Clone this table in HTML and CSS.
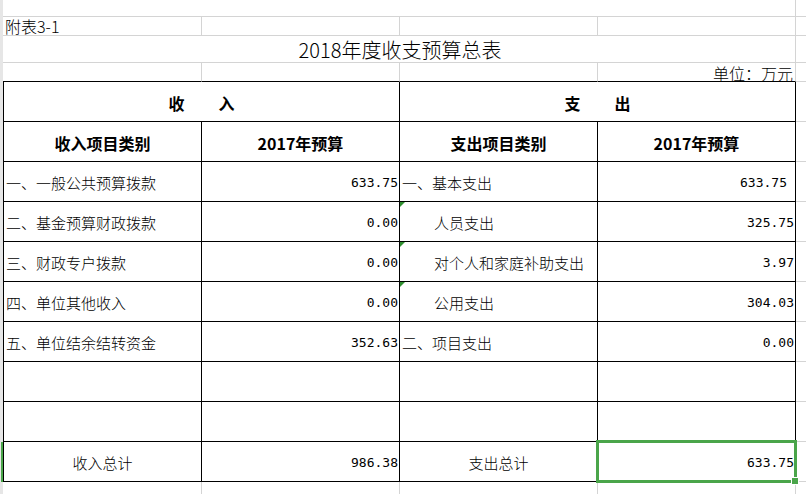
FILE: index.html
```html
<!DOCTYPE html>
<html lang="zh-CN">
<head>
<meta charset="utf-8">
<title>2018年度收支预算总表</title>
<link rel="stylesheet" href="styles.css">
</head>
<body>
<div class="sheet">
  <!-- row 0 -->
  <div class="rh"></div>
  <div class="g span4"></div>
  <div class="gx"></div>

  <!-- row 1 -->
  <div class="rh"></div>
  <div class="g note">附表3-1</div>
  <div class="g"></div>
  <div class="g"></div>
  <div class="g"></div>
  <div class="gx"></div>

  <!-- row 2 -->
  <div class="rh"></div>
  <div class="g span4 title">2018年度收支预算总表</div>
  <div class="gx"></div>

  <!-- row 3 -->
  <div class="rh"></div>
  <div class="g edge"></div>
  <div class="g edge"></div>
  <div class="g edge"></div>
  <div class="g edge unit">单位：万元</div>
  <div class="gx"></div>

  <!-- header 1 -->
  <div class="rh"></div>
  <div class="t first span2 hd spread"><span>收</span><span>入</span></div>
  <div class="t span2 hd spread"><span>支</span><span>出</span></div>
  <div class="gx"></div>

  <!-- header 2 -->
  <div class="rh"></div>
  <div class="t first hd">收入项目类别</div>
  <div class="t hd">2017年预算</div>
  <div class="t hd">支出项目类别</div>
  <div class="t hd">2017年预算</div>
  <div class="gx"></div>

  <!-- data -->
  <div class="rh"></div>
  <div class="t first lbl">一、一般公共预算拨款</div>
  <div class="t num">633.75</div>
  <div class="t lbl">一、基本支出</div>
  <div class="t num trail">633.75</div>
  <div class="gx"></div>

  <div class="rh"></div>
  <div class="t first lbl">二、基金预算财政拨款</div>
  <div class="t num">0.00</div>
  <div class="t lbl indent flag">人员支出</div>
  <div class="t num">325.75</div>
  <div class="gx"></div>

  <div class="rh"></div>
  <div class="t first lbl">三、财政专户拨款</div>
  <div class="t num">0.00</div>
  <div class="t lbl indent flag">对个人和家庭补助支出</div>
  <div class="t num">3.97</div>
  <div class="gx"></div>

  <div class="rh"></div>
  <div class="t first lbl">四、单位其他收入</div>
  <div class="t num">0.00</div>
  <div class="t lbl indent flag">公用支出</div>
  <div class="t num">304.03</div>
  <div class="gx"></div>

  <div class="rh"></div>
  <div class="t first lbl">五、单位结余结转资金</div>
  <div class="t num">352.63</div>
  <div class="t lbl">二、项目支出</div>
  <div class="t num">0.00</div>
  <div class="gx"></div>

  <div class="rh"></div>
  <div class="t first"></div>
  <div class="t"></div>
  <div class="t"></div>
  <div class="t"></div>
  <div class="gx"></div>

  <div class="rh"></div>
  <div class="t first"></div>
  <div class="t"></div>
  <div class="t"></div>
  <div class="t"></div>
  <div class="gx"></div>

  <!-- totals -->
  <div class="rh active"></div>
  <div class="t first center">收入总计</div>
  <div class="t num">986.38</div>
  <div class="t center">支出总计</div>
  <div class="t num">633.75</div>
  <div class="gx"></div>

  <!-- trailing row -->
  <div class="rh"></div>
  <div class="v"></div>
  <div class="v"></div>
  <div class="v"></div>
  <div class="v"></div>
  <div></div>

  <div class="sel"></div>
</div>
</body>
</html>
```

FILE: styles.css
```css
* {
  box-sizing: border-box;
  margin: 0;
  padding: 0;
}

html, body {
  background: #ffffff;
}

body {
  margin: 0;
  font-family: "Noto Sans CJK SC", "Noto Sans", sans-serif;
  font-size: 15px;
  font-weight: 300;
  color: #000000;
}

.sheet {
  position: relative;
  display: grid;
  grid-template-columns: 3px 199px 198px 198px 198px 10px;
  grid-template-rows: 17px 19px 27px 19px repeat(10, 40px) 12px;
  width: 806px;
  height: 494px;
  overflow: hidden;
}

/* row header sliver at the far left */
.rh {
  background: #e6e6e6;
}

.rh.active {
  box-shadow: inset -2px 0 0 #4aa54a;
}

/* light grid cells */
.g {
  border-right: 1px solid #d4d4d4;
  border-bottom: 1px solid #d4d4d4;
  display: flex;
  align-items: center;
  white-space: nowrap;
}

.gx {
  border-bottom: 1px solid #d4d4d4;
}

.v {
  border-right: 1px solid #d4d4d4;
}

.edge {
  border-bottom-color: #000000;
}

.span4 {
  grid-column: span 4;
}

.span2 {
  grid-column: span 2;
}

.note {
  padding-left: 2px;
  font-size: 16px;
}

.title {
  justify-content: center;
  font-size: 20px;
  padding-top: 1px;
  padding-left: 2px;
}

.unit {
  justify-content: flex-end;
  padding-right: 2px;
  padding-top: 2px;
  font-size: 16px;
}

/* table cells */
.t {
  position: relative;
  border-right: 1px solid #000000;
  border-bottom: 1px solid #000000;
  display: flex;
  align-items: center;
  padding-top: 2px;
  white-space: nowrap;
}

.t.first {
  border-left: 1px solid #000000;
}

.hd {
  justify-content: center;
  font-weight: 700;
  font-size: 16px;
}

.spread {
  gap: 34px;
}

.lbl {
  padding-left: 2px;
}

.indent {
  padding-left: 34px;
}

.center {
  justify-content: center;
}

.num {
  justify-content: flex-end;
  padding-right: 1px;
  font-family: "DejaVu Sans Mono", "Liberation Mono", monospace;
  font-size: 13px;
  font-weight: 400;
}

.num.trail {
  padding-right: 8px;
}

/* small green error indicator in the top-left corner */
.flag::before {
  content: "";
  position: absolute;
  left: 0;
  top: 0;
  width: 0;
  height: 0;
  border-top: 5px solid #2f8f2f;
  border-right: 5px solid transparent;
}

/* selected cell */
.sel {
  position: absolute;
  left: 596px;
  top: 440px;
  width: 201px;
  height: 43px;
  border: 3px solid #4aa54a;
}

.sel::after {
  content: "";
  position: absolute;
  right: -4px;
  bottom: -4px;
  width: 6px;
  height: 6px;
  background: #4aa54a;
  box-shadow: 0 0 0 1px #ffffff;
}
```
